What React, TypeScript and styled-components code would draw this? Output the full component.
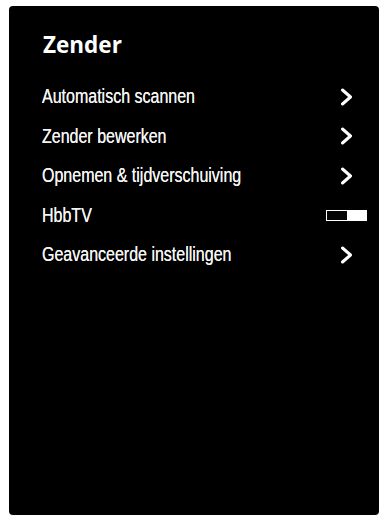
import styled, { createGlobalStyle } from 'styled-components';

const GlobalStyle = createGlobalStyle`
  html, body {
    margin: 0;
    padding: 0;
    background: #ffffff;
  }
`;

const Panel = styled.section`
  box-sizing: border-box;
  width: 370px;
  height: 509px;
  margin: 6px 0 0 9px;
  background: #000000;
  border-radius: 4px;
  padding: 23px 12px 0 33px;
  display: flex;
  flex-direction: column;
`;

const Title = styled.h1`
  margin: 0 0 0 1px;
  height: 31px;
  font-family: 'Open Sans', 'Liberation Sans', sans-serif;
  font-weight: 700;
  font-size: 22.5px;
  line-height: 31px;
  color: #ffffff;
`;

const Menu = styled.ul`
  list-style: none;
  margin: 17px 0 0 0;
  padding: 0;
  display: flex;
  flex-direction: column;
`;

const Row = styled.li`
  height: 39.5px;
  display: flex;
  align-items: center;
  justify-content: space-between;
`;

// condensed face is not installed, so Arial metrics are narrowed
const Label = styled.span`
  display: inline-block;
  font-family: 'Liberation Sans', Arial, sans-serif;
  font-size: 20px;
  color: #f4f4f4;
  white-space: nowrap;
  transform: scaleX(0.8);
  transform-origin: left center;
  text-shadow: 0 0 0.4px #f4f4f4;
`;

const Control = styled.span`
  width: 41px;
  display: flex;
  justify-content: center;
  align-items: center;
`;

const Toggle = styled.span<{ $on: boolean }>`
  box-sizing: border-box;
  width: 41px;
  height: 11px;
  border: 1.5px solid #ffffff;
  background: #050505;
  display: flex;
  justify-content: ${({ $on }) => ($on ? 'flex-end' : 'flex-start')};
`;

const Knob = styled.span`
  width: 19px;
  height: 100%;
  background: #ffffff;
`;

const Chevron = () => (
  <svg width="13" height="18" viewBox="0 0 13 18">
    <polyline
      points="2.5,2 10.5,9 2.5,16"
      fill="none"
      stroke="#ffffff"
      strokeWidth="3"
      strokeLinecap="round"
      strokeLinejoin="round"
    />
  </svg>
);

type Item = { label: string; kind: 'link' | 'toggle'; on?: boolean };

const items: Item[] = [
  { label: 'Automatisch scannen', kind: 'link' },
  { label: 'Zender bewerken', kind: 'link' },
  { label: 'Opnemen & tijdverschuiving', kind: 'link' },
  { label: 'HbbTV', kind: 'toggle', on: true },
  { label: 'Geavanceerde instellingen', kind: 'link' },
];

export default function App() {
  return (
    <>
      <GlobalStyle />
      <Panel>
        <Title>Zender</Title>
        <Menu>
          {items.map((item) => (
            <Row key={item.label}>
              <Label>{item.label}</Label>
              <Control>
                {item.kind === 'link' ? (
                  <Chevron />
                ) : (
                  <Toggle $on={!!item.on}>
                    <Knob />
                  </Toggle>
                )}
              </Control>
            </Row>
          ))}
        </Menu>
      </Panel>
    </>
  );
}
